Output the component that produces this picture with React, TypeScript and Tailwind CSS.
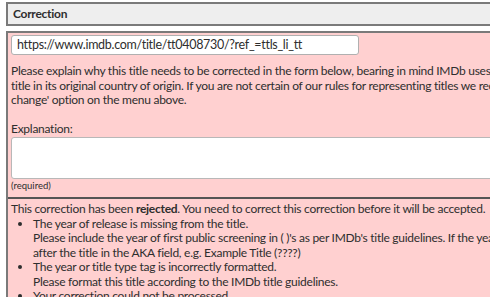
import React from 'react';

export default function App() {
  return (
    <div className="w-[490px] h-[297px] overflow-hidden bg-white text-[#2e2e2e] font-['Lato',sans-serif] text-[12px] tracking-[-0.27px] leading-[14.5px]">
      <div className="w-[600px] pl-[6px] pt-[2px]">
        <div className="h-[24px] flex items-center px-[5px] bg-[#eeeeee] border-2 border-[#7a7a7a] font-bold">
          Correction
        </div>

        <div className="mt-[5px] bg-[#ffd0d0] border-2 border-[#7a7a7a]">
          <div className="px-[3px] pt-[2px] pb-[5px]">
            <div className="w-[348px] h-[20px] flex items-center px-[5px] bg-white border border-[#b0b0b0] rounded-[3px] text-[12.5px] tracking-[-0.3px]">
              https://www.imdb.com/title/tt0408730/?ref_=ttls_li_tt
            </div>
            <p className="mt-[9px] whitespace-nowrap">
              Please explain why this title needs to be corrected in the form below, bearing in mind IMDb uses the
              <br />
              title in its original country of origin. If you are not certain of our rules for representing titles we recommend using the 'Title
              <br />
              change' option on the menu above.
            </p>
            <div className="mt-[14px]">Explanation:</div>
            <div className="mt-[1px] h-[42px] bg-white border border-[#b8b8b8] rounded-[3px]" />
            <div className="mt-[1px] text-[9.5px] tracking-normal leading-[12px]">(required)</div>
          </div>
          <div className="border-t-2 border-[#555] px-[3px] pt-[3px] whitespace-nowrap">
            <div>
              This correction has been <b>rejected</b>. You need to correct this correction before it will be accepted.
            </div>
            <ul className="list-disc pl-[22px]">
              <li>
                The year of release is missing from the title.
                <br />
                Please include the year of first public screening in ( )'s as per IMDb's title guidelines. If the year is unknown, please add (????)
                <br />
                after the title in the AKA field, e.g. Example Title (????)
              </li>
              <li>
                The year or title type tag is incorrectly formatted.
                <br />
                Please format this title according to the IMDb title guidelines.
              </li>
              <li>Your correction could not be processed.</li>
            </ul>
          </div>
        </div>
      </div>
    </div>
  );
}
